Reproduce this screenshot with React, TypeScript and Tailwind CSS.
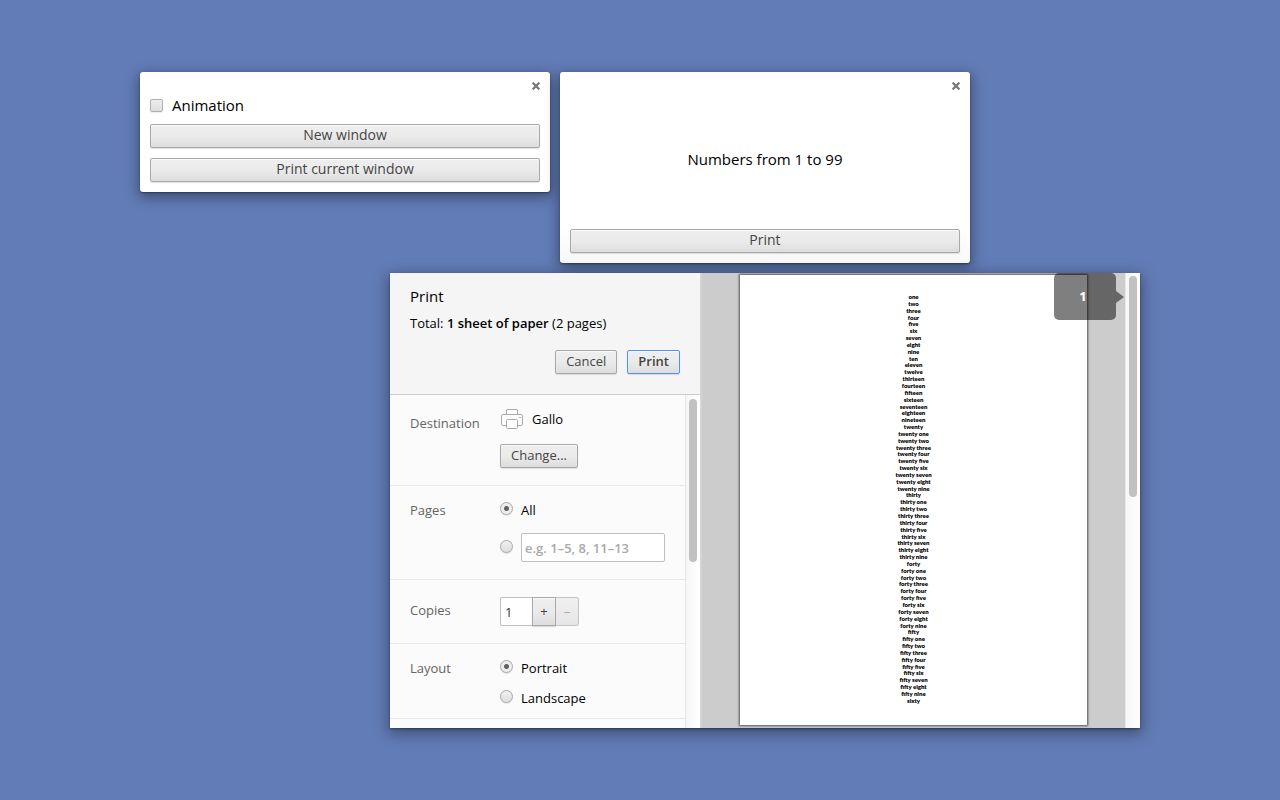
import type { ReactNode } from "react";

const ones = ["one", "two", "three", "four", "five", "six", "seven", "eight", "nine"];
const teens = ["ten", "eleven", "twelve", "thirteen", "fourteen", "fifteen", "sixteen", "seventeen", "eighteen", "nineteen"];
const tens = ["twenty", "thirty", "forty", "fifty"];

const numbers = [
  ...ones,
  ...teens,
  ...tens.flatMap((ten) => [ten, ...ones.map((one) => `${ten} ${one}`)]),
  "sixty",
];

const buttonLook =
  "rounded-[2px] border bg-linear-to-b from-[#eeeeee] via-[#ebebeb] to-[#dddddd] text-[#444444] shadow-[0_1px_1px_rgba(0,0,0,0.12),inset_0_1px_1px_rgba(255,255,255,0.75)]";

function WideButton({ children }: { children: ReactNode }) {
  return (
    <button
      type="button"
      className={`${buttonLook} flex h-6 w-full items-center justify-center border-[#a8a8a8] pb-0.5 text-[14px] leading-5`}
    >
      {children}
    </button>
  );
}

function SmallButton({ children, primary = false }: { children: ReactNode; primary?: boolean }) {
  return (
    <button
      type="button"
      className={`${buttonLook} flex h-6 items-center px-2.5 pb-0.5 text-[13px] leading-5 ${
        primary ? "border-[#4d90fe] font-semibold" : "border-[#a8a8a8]"
      }`}
    >
      {children}
    </button>
  );
}

function CloseButton() {
  return (
    <button type="button" aria-label="Close" className="absolute top-2.5 right-2.5 size-2">
      <svg viewBox="0 0 8 8" className="size-2" stroke="#777777" strokeWidth="2.2" fill="none">
        <path d="M0.6 0.6 7.4 7.4M7.4 0.6 0.6 7.4" />
      </svg>
    </button>
  );
}

function Radio({ id, name, checked = false, label }: { id: string; name: string; checked?: boolean; label?: string }) {
  return (
    <input
      type="radio"
      id={id}
      name={name}
      defaultChecked={checked}
      aria-label={label}
      className="mb-[3px] size-[13px] shrink-0 appearance-none rounded-full border border-[#a8a8a8] bg-linear-to-b from-[#f0f0f0] to-[#dedede] shadow-[0_1px_1px_rgba(0,0,0,0.1)] checked:bg-[radial-gradient(circle,#606060_0_2px,#ededed_3px)]"
    />
  );
}

function Section({ title, className, children }: { title: string; className: string; children: ReactNode }) {
  return (
    <section className={`flex border-b border-[#e8e8e8] pl-5 ${className}`}>
      <h2 className="w-[90px] shrink-0 text-[13px] leading-5 text-[#646464]">{title}</h2>
      <div className="min-w-0 flex-1">{children}</div>
    </section>
  );
}

function PrinterIcon() {
  return (
    <svg viewBox="0 0 24 21" className="h-[21px] w-6 shrink-0" fill="#fcfcfc" stroke="#aaaaaa">
      <rect x="6.5" y="0.5" width="11" height="7" rx="0.5" />
      <rect x="1.5" y="5.5" width="21" height="11" rx="1.5" />
      <path d="M19 8.5h2" />
      <rect x="6.5" y="10.5" width="11" height="9" rx="1" fill="#ffffff" />
    </svg>
  );
}

const windowShadow = "shadow-[0_4px_14px_2px_rgba(0,0,0,0.35),0_1px_2px_rgba(0,0,0,0.4)]";

export default function App() {
  return (
    <main className="relative min-h-screen overflow-hidden bg-[#627cb7] font-['Open_Sans','Noto_Sans',sans-serif] text-black">
      <section
        aria-label="Options"
        className={`absolute top-[72px] left-[140px] flex w-[410px] flex-col gap-2.5 rounded-[3px] bg-white px-2.5 pt-6 pb-2.5 ${windowShadow}`}
      >
        <CloseButton />
        <label className="flex items-center gap-[9px] text-[15px] leading-[18px]">
          <input
            type="checkbox"
            className="size-[13px] appearance-none rounded-[2px] border border-[#b0b0b0] bg-linear-to-b from-[#ededed] to-[#dedede] shadow-[0_1px_1px_rgba(0,0,0,0.08)]"
          />
          Animation
        </label>
        <WideButton>New window</WideButton>
        <WideButton>Print current window</WideButton>
      </section>

      <section
        aria-label="Numbers"
        className={`absolute top-[72px] left-[560px] flex w-[410px] flex-col rounded-[3px] bg-linear-to-b from-white from-80% to-[#f8f8f8] px-2.5 pb-2.5 ${windowShadow}`}
      >
        <CloseButton />
        <p className="pt-[77px] pb-[60px] text-center text-[15px] leading-5">Numbers from 1 to 99</p>
        <WideButton>Print</WideButton>
      </section>

      <section aria-label="Print" className={`absolute top-[273px] left-[390px] flex h-[455px] w-[750px] ${windowShadow}`}>
        <form className="flex w-[312px] shrink-0 flex-col border-r-2 border-[#d4d4d4] bg-[#fbfbfb]">
          <header className="h-[122px] shrink-0 border-b border-[#cccccc] bg-[#f5f5f5] px-5 pt-[13px]">
            <h1 className="text-[15px] leading-5">Print</h1>
            <p className="mt-[7px] text-[13px] leading-5">
              Total: <b className="font-semibold">1 sheet of paper</b> (2 pages)
            </p>
            <div className="mt-[17px] flex justify-end gap-2.5">
              <SmallButton>Cancel</SmallButton>
              <SmallButton primary>Print</SmallButton>
            </div>
          </header>
          <div className="flex min-h-0 flex-1">
            <div className="flex-1 overflow-hidden border-r border-[#e8e8e8]">
              <Section title="Destination" className="h-[91px] items-start pt-[18px]">
                <div className="-mt-3.5 flex h-10 items-center gap-2 text-[13px] leading-5">
                  <PrinterIcon />
                  Gallo
                </div>
                <div className="flex pt-[5px]">
                  <SmallButton>Change...</SmallButton>
                </div>
              </Section>
              <Section title="Pages" className="h-[94px] pt-3.5">
                <div className="flex items-center gap-2 text-[13px] leading-5">
                  <Radio id="pages-all" name="pages" checked />
                  <label htmlFor="pages-all">All</label>
                </div>
                <div className="mt-[13px] flex items-center gap-2 pr-5">
                  <Radio id="pages-range" name="pages" label="Page range" />
                  <input
                    type="text"
                    aria-label="Pages to print"
                    placeholder="e.g. 1–5, 8, 11–13"
                    className="h-[29px] w-full min-w-0 rounded-[2px] border border-[#bfbfbf] bg-white px-[3px] text-[13px] placeholder:font-semibold placeholder:text-[#a9a9a9]"
                  />
                </div>
              </Section>
              <Section title="Copies" className="h-16 items-center pb-1">
                <div className="flex pt-1 text-[13px]">
                  <input
                    type="text"
                    aria-label="Number of copies"
                    defaultValue="1"
                    className="h-[29px] w-8 rounded-l-[2px] border border-r-0 border-[#bfbfbf] bg-white px-1 text-[#333333]"
                  />
                  <button type="button" aria-label="More copies" className={`${buttonLook} w-6 rounded-none border-[#a8a8a8]`}>
                    +
                  </button>
                  <button
                    type="button"
                    aria-label="Fewer copies"
                    disabled
                    className="w-[23px] rounded-r-[3px] border border-l-0 border-[#c4c4c4] bg-linear-to-b from-[#f0f0f0] to-[#e6e6e6] text-[#aaaaaa]"
                  >
                    –
                  </button>
                </div>
              </Section>
              <Section title="Layout" className="h-[75px] pt-3.5">
                <div className="flex flex-col gap-2.5 text-[13px] leading-5">
                  <div className="flex items-center gap-2">
                    <Radio id="portrait" name="layout" checked />
                    <label htmlFor="portrait">Portrait</label>
                  </div>
                  <div className="flex items-center gap-2">
                    <Radio id="landscape" name="layout" />
                    <label htmlFor="landscape">Landscape</label>
                  </div>
                </div>
              </Section>
            </div>
            <div className="flex w-3.5 justify-center bg-linear-to-r from-[#f6f6f6] to-white pt-1">
              <div className="h-[163px] w-2 rounded-full bg-[#c1c1c1]" />
            </div>
          </div>
        </form>

        <div className="relative flex min-w-0 flex-1 justify-center overflow-hidden bg-[#cccccc] pt-0.5 pb-[3px]">
          <article className="flex w-[347px] bg-white pt-[19px] pb-[21px] shadow-[0_0_2px_1px_rgba(0,0,0,0.6)]">
            <ul className="flex flex-1 flex-col justify-between text-center font-['Lato','Open_Sans',sans-serif] text-[6px] leading-[6px] font-extrabold">
              {numbers.map((number) => (
                <li key={number}>{number}</li>
              ))}
            </ul>
          </article>
          <div className="absolute top-0 right-px flex items-center">
            <div className="flex h-[47px] w-[62px] items-center justify-center rounded-[5px] bg-black/50 pr-1 text-[13px] font-bold text-white">
              1
            </div>
            <svg viewBox="0 0 8 12" className="h-3 w-2" fill="#000000" fillOpacity="0.5">
              <path d="M0 0 8 6 0 12z" />
            </svg>
          </div>
        </div>
        <div className="flex w-[15px] shrink-0 justify-center border-l border-[#e8e8e8] bg-linear-to-r from-[#f7f7f7] to-white pt-[3px]">
          <div className="h-[221px] w-2 rounded-full bg-[#c1c1c1]" />
        </div>
      </section>
    </main>
  );
}
